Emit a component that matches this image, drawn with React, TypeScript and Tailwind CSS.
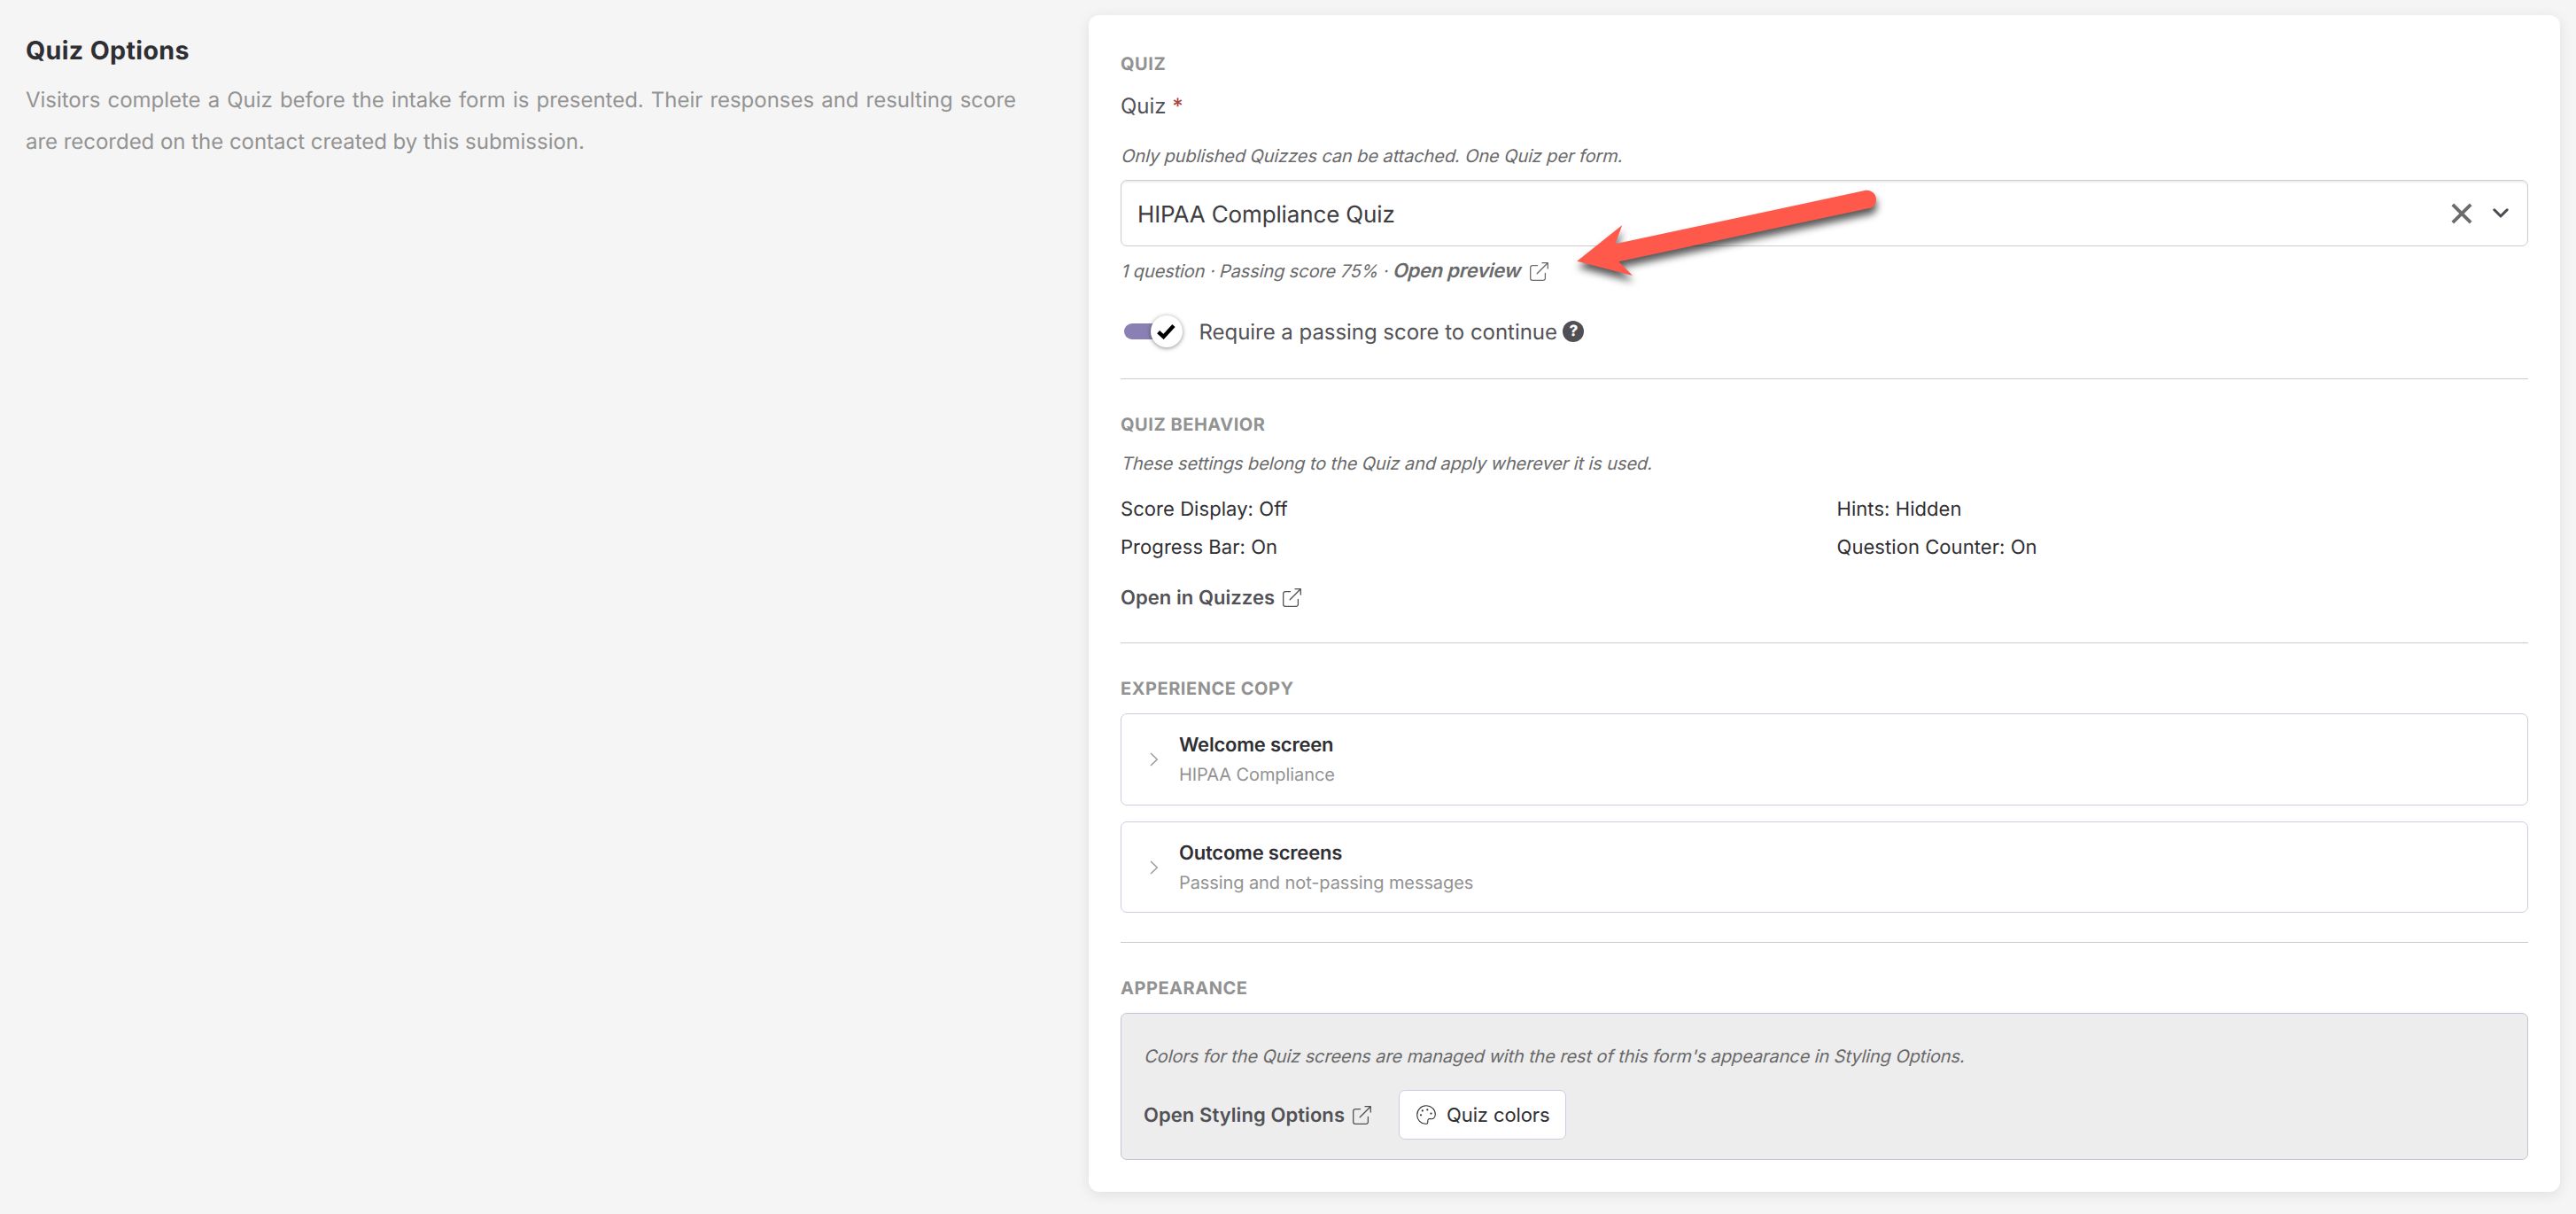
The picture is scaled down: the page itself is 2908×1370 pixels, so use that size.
import React, { type ReactNode } from "react";

function ExternalIcon({ className }: { className: string }) {
  return (
    <svg viewBox="0 0 21 21" fill="none" stroke="currentColor" strokeWidth="1.3" strokeLinejoin="round" strokeLinecap="round" className={`h-[21px] w-[21px] shrink-0 ${className}`}>
      <path d="M8.6 3.6H3A2.3 2.3 0 0 0 .7 5.9V18A2.3 2.3 0 0 0 3 20.3H15.1A2.3 2.3 0 0 0 17.4 18V12.4" />
      <path d="M8.2 12.8L20.2 .8M14 .7H20.3V7" />
    </svg>
  );
}

function PaletteIcon() {
  return (
    <svg viewBox="0 0 22 22" className="h-[22px] w-[22px] shrink-0" fill="none" stroke="#2f2e33" strokeWidth="1.1">
      <path d="M11 .8C5.2 .8 .7 5.3 .7 11.2C.7 17 5 21.3 10.3 21.3C12.6 21.3 13 20.2 12.8 18.6C12.6 16.4 13.6 15.2 15.8 15.6C19 16.2 21.3 14.2 21.3 10.6C21.3 5 16.8 .8 11 .8Z" />
      <g fill="#2f2e33" stroke="none">
        <circle cx="5" cy="11.3" r="1.1" />
        <circle cx="6.8" cy="6.4" r="1.1" />
        <circle cx="12.3" cy="5.3" r="1.1" />
        <circle cx="16.5" cy="9.6" r="1.1" />
      </g>
    </svg>
  );
}

function SectionHeading({ children }: { children: ReactNode }) {
  return <h3 className="text-[20px] leading-[39px] font-bold tracking-[0.53px] text-[#929292] uppercase">{children}</h3>;
}

function Slanted({ className, children }: { className: string; children: ReactNode }) {
  return <span className={`inline-block origin-[0_22px] -skew-x-[14deg] text-[20px] leading-[30px] whitespace-pre text-[#69696a] ${className}`}>{children}</span>;
}

function Divider({ className }: { className: string }) {
  return <hr className={`h-px border-0 bg-[#cbcbd4] ${className}`} />;
}

function Disclosure({ title, detail, className }: { title: string; detail: string; className: string }) {
  return (
    <div className={`flex items-start rounded-[7px] border border-[#cdcddf] pt-[18px] pl-8 ${className}`}>
      <svg viewBox="0 0 10 16" className="mt-[25px] h-4 w-2.5 shrink-0" fill="none" stroke="#949494" strokeWidth="1.3">
        <path d="M1 1L8.3 8L1 15" />
      </svg>
      <div className="pl-[23px]">
        <div className="text-[22px] leading-[34px] font-semibold tracking-[-0.21px] text-[#2f2e33]">{title}</div>
        <div className="text-[20px] leading-8 tracking-[-0.09px] text-[#929292]">{detail}</div>
      </div>
    </div>
  );
}

function Arrow() {
  return (
    <svg viewBox="0 0 360 130" className="pointer-events-none absolute top-[-7px] left-[504px] h-[130px] w-[360px] overflow-visible drop-shadow-[1px_7px_4px_rgba(0,0,0,0.65)]">
      <path fill="#ff594b" d="M10.3 97.7L61.3 57L53.3 78.3L336.2 17.8C342 17 348 21.500 348 27.700C348 33 345.500 36.500 341.200 37.700L57.300 98.300L73 114Z" />
    </svg>
  );
}

export default function App() {
  return (
    <main className="flex h-[1370px] items-start bg-[#f5f5f5] font-[Inter,sans-serif] [text-rendering:geometricPrecision]">
      <section className="w-[1229px] pr-[82px] pl-[29px]">
        <h2 className="mt-[37px] text-[28.6px] leading-10 font-bold tracking-[0.36px] text-[#2f2e33]">Quiz Options</h2>
        <p className="mt-3 text-justify text-[24px] leading-[47px] tracking-[-0.028px] text-[#939393]">
          Visitors complete a Quiz before the intake form is presented. Their responses and resulting score are recorded on the contact created by this submission.
        </p>
      </section>

      <section className="mt-[17px] h-[1328px] w-[1661px] rounded-xl bg-white p-9 shadow-[0_3px_16px_rgba(0,0,0,0.09)]">
        <SectionHeading>Quiz</SectionHeading>
        <div className="mt-1 text-[24px] leading-[48px] text-[#525156]">
          Quiz <span className="font-medium text-[#a94442]">*</span>
        </div>
        <div className="mt-[17px] h-[30px]">
          <Slanted className="tracking-[-0.1px]">Only published Quizzes can be attached. One Quiz per form.</Slanted>
        </div>
        <div className="relative mt-3 flex h-[75px] items-center rounded-[7px] border border-[#cdcdcf] pr-[21px] pl-[18px] shadow-[inset_0_2px_2px_rgba(0,0,0,0.07)]">
          <span className="flex-1 pt-1 text-[26px] leading-9 tracking-[-0.14px] text-[#3e3d42]">HIPAA Compliance Quiz</span>
          <svg viewBox="0 0 24 24" className="mr-[23px] h-6 w-6" stroke="#6c6c6e" strokeWidth="3.8">
            <path d="M1.800 1.800L22.200 22.200M22.200 1.800L1.800 22.200" />
          </svg>
          <svg viewBox="0 0 18 11" className="h-[11px] w-[18px]" fill="none" stroke="#4b4a50" strokeWidth="3" strokeLinecap="round" strokeLinejoin="round">
            <path d="M1.800 1.800L9 9L16.200 1.800" />
          </svg>
          <Arrow />
        </div>
        <div className="mt-[13px] flex h-[30px] items-center">
          <Slanted className="tracking-[-0.11px]">
            1 question · Passing score 75% · <span className="text-[22px] font-semibold tracking-[-0.25px]">Open preview</span>
          </Slanted>
          <ExternalIcon className="ml-[11px] text-[#6b6b6c]" />
        </div>
        <div className="mt-[35px] flex h-9 items-center">
          <div className="relative ml-1 flex h-9 w-[65.5px] items-center">
            <div className="h-[18px] w-[50px] rounded-full bg-[#8b80b3]" />
            <div className="absolute top-0 right-0 flex h-9 w-9 items-center justify-center rounded-full bg-white shadow-[0_1px_5px_rgba(0,0,0,0.45)]">
              <svg viewBox="0 0 21 17" className="h-[17px] w-[21px]" fill="none" stroke="#000" strokeWidth="4.4">
                <path d="M1.600 8.700L7.500 14L19 1.500" />
              </svg>
            </div>
          </div>
          <span className="ml-[19px] pt-0.5 text-[24px] leading-9 tracking-[-0.04px] text-[#525156]">Require a passing score to continue</span>
          <span className="ml-[6.5px] flex h-6 w-6 items-center justify-center rounded-full bg-[#504f54] text-[17px] leading-6 font-extrabold text-white">?</span>
        </div>

        <Divider className="mt-[35px]" />
        <div className="mt-8">
          <SectionHeading>Quiz behavior</SectionHeading>
        </div>
        <div className="mt-[9px] h-[30px]">
          <Slanted className="tracking-[-0.09px]">These settings belong to the Quiz and apply wherever it is used.</Slanted>
        </div>
        <div className="mt-4 grid grid-cols-2 gap-x-7 text-[22px] leading-[43px] tracking-[0.06px] text-[#2f2e33]">
          <div>Score Display: Off</div>
          <div>Hints: Hidden</div>
          <div>Progress Bar: On</div>
          <div>Question Counter: On</div>
        </div>
        <a className="mt-[18px] flex h-8 items-center text-[22px] leading-8 font-semibold tracking-[0.06px] text-[#525156]">
          <span className="pt-0.5">Open in Quizzes</span>
          <ExternalIcon className="ml-[9px]" />
        </a>

        <Divider className="mt-[35px]" />
        <div className="mt-8">
          <SectionHeading>Experience copy</SectionHeading>
        </div>
        <Disclosure className="mt-2 h-[104px]" title="Welcome screen" detail="HIPAA Compliance" />
        <Disclosure className="mt-[18px] h-[103px]" title="Outcome screens" detail="Passing and not-passing messages" />

        <Divider className="mt-[33px]" />
        <div className="mt-8">
          <SectionHeading>Appearance</SectionHeading>
        </div>
        <div className="mt-2 h-[166px] rounded-[7px] border border-[#c3c2d3] bg-[#ededed] pt-[33px] pl-[25px]">
          <div className="h-[30px]">
            <Slanted className="tracking-[-0.1px]">Colors for the Quiz screens are managed with the rest of this form's appearance in Styling Options.</Slanted>
          </div>
          <div className="mt-[23px] flex h-14 items-center">
            <a className="flex items-center text-[22px] leading-8 font-semibold tracking-[0.073px] text-[#525156]">
              <span className="pt-0.5">Open Styling Options</span>
              <ExternalIcon className="ml-[9px]" />
            </a>
            <button className="ml-[31px] flex h-14 w-[188.5px] items-center rounded-[7px] border border-[#cdcce0] bg-white pl-[19px] text-[22px] leading-8 tracking-[-0.122px] whitespace-nowrap text-[#2f2e33]">
              <PaletteIcon />
              <span className="ml-3">Quiz colors</span>
            </button>
          </div>
        </div>
      </section>
    </main>
  );
}
